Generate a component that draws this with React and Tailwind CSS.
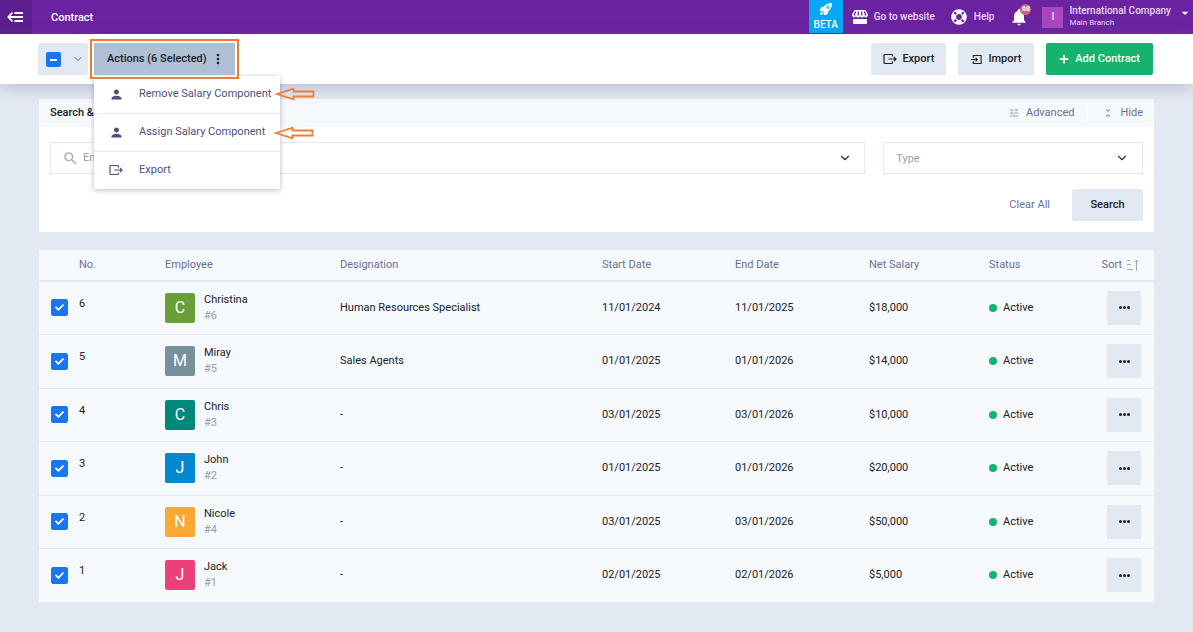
import React, { useState } from 'react';
import { FaCheck, FaPlus, FaLifeRing } from 'react-icons/fa';
import { IoRocket } from 'react-icons/io5';
import { MdNotifications, MdPerson, MdTune, MdUnfoldLess, MdSearch, MdMoreVert, MdArrowDropDown } from 'react-icons/md';
import { ChevronDown } from 'lucide-react';

const CONTRACTS = [
  { no: 6, name: 'Christina', code: '#6', color: 'bg-[#689f38]', designation: 'Human Resources Specialist', start: '11/01/2024', end: '11/01/2025', salary: '$18,000' },
  { no: 5, name: 'Miray', code: '#5', color: 'bg-[#78909c]', designation: 'Sales Agents', start: '01/01/2025', end: '01/01/2026', salary: '$14,000' },
  { no: 4, name: 'Chris', code: '#3', color: 'bg-[#00897b]', designation: '-', start: '03/01/2025', end: '03/01/2026', salary: '$10,000' },
  { no: 3, name: 'John', code: '#2', color: 'bg-[#0288d1]', designation: '-', start: '01/01/2025', end: '01/01/2026', salary: '$20,000' },
  { no: 2, name: 'Nicole', code: '#4', color: 'bg-[#f9a833]', designation: '-', start: '03/01/2025', end: '03/01/2026', salary: '$50,000' },
  { no: 1, name: 'Jack', code: '#1', color: 'bg-[#ec407a]', designation: '-', start: '02/01/2025', end: '02/01/2026', salary: '$5,000' }
];

const MenuToggleIcon = () => (
  <svg width="16" height="12" viewBox="0 0 16 12" fill="none" stroke="currentColor" strokeWidth="1.800">
    <path d="M1 6h15M5.500 1.500 1.300 6l4.200 4.500M7.500 2H16M7.500 10H16"/>
  </svg>
);

const StoreIcon = () => (
  <svg width="16" height="14" viewBox="0 0 16 14" fill="none">
    <path d="M2.500 0h11L16 4.500C16 8 12.500 8 12 6.300 11.500 8 8.500 8 8 6.300 7.500 8 4.500 8 4 6.300 3.500 8 0 8 0 4.500z" fill="currentColor"/>
    <path d="M3.500 1.500 2.300 5.500M6.300 1.500v4M9.700 1.500v4M12.500 1.500l1.200 4" stroke="#6b23a1" strokeWidth="1.300"/>
    <path d="M1 9h14v4a1 1 0 0 1-1 1H2a1 1 0 0 1-1-1z" fill="currentColor"/>
  </svg>
);

const ExportIcon = ({ size = 14 }) => (
  <svg width={size} height={size} viewBox="0 0 14 14" fill="none" stroke="currentColor" strokeWidth="1.200">
    <path d="M9.500 4.500v-1a1 1 0 0 0-1-1H2a1 1 0 0 0-1 1v7a1 1 0 0 0 1 1h6.500a1 1 0 0 0 1-1v-1M5.500 7H13M11 5l2 2-2 2"/>
  </svg>
);

const ImportIcon = () => (
  <svg width="11" height="11" viewBox="0 0 12 12" fill="none" stroke="currentColor" strokeWidth="1.200">
    <path d="M2.500 4V1.600h8.500v8.800H2.500V8M0 6h7M5 4l2 2-2 2"/>
  </svg>
);

const SortIcon = () => (
  <svg width="13" height="12" viewBox="0 0 13 12" fill="none" stroke="currentColor" strokeWidth="1">
    <path d="M1 1.500h3M1 5.500h4M1 10.500h6M10.500 12V1.200M8.500 3.200l2-2 2 2"/>
  </svg>
);

// Hollow pointer next to a menu entry
const PointerArrow = ({ className }) => (
  <svg className={className} width="41" height="14" viewBox="0 0 41 14" fill="none" stroke="#ed7d31" strokeWidth="1.800">
    <path d="M3 7 19.500 1.700V4.500H39.500v5H19.500v2.800z"/>
  </svg>
);

const ACTIONS = [
  { label: 'Remove Salary Component', icon: <MdPerson size={15}/>, arrow: 'absolute left-[180px] top-[11px]' },
  { label: 'Assign Salary Component', icon: <MdPerson size={15}/>, arrow: 'absolute left-[179px] top-3' },
  { label: 'Export', icon: <ExportIcon/> }
];

export default function App() {
  const [selected, setSelected] = useState(CONTRACTS.map(c => c.no));
  const [menuOpen, setMenuOpen] = useState(true);
  const [query, setQuery] = useState('');

  const toggle = (no) =>
    setSelected(selected.includes(no) ? selected.filter(n => n !== no) : [...selected, no]);

  return (
    <div className="min-h-screen bg-[#e3e9f2] font-['Roboto',sans-serif] text-[11px] leading-4 text-[#1c2126]">
      {/* Top bar */}
      <header className="flex items-stretch h-[34px] bg-[#6b23a1] text-[#ead9f7]">
        <button aria-label="Collapse menu" className="w-8 flex items-center justify-center pr-[2px] bg-[#5c1e8c] text-white">
          <MenuToggleIcon/>
        </button>
        <h1 className="ml-[19px] pt-px self-center font-medium text-white">Contract</h1>
        <div className="ml-auto flex items-center">
          <a href="#beta" className="w-[34px] h-[33px] mb-px mr-[9px] flex flex-col items-center justify-between pt-[2px] pb-px bg-[#03a9f4] text-white">
            <IoRocket size={14}/>
            <span className="text-[10px] leading-[14px] font-medium">BETA</span>
          </a>
          <a href="#website" className="flex items-center gap-[6px] mr-4 text-[10px] font-medium">
            <span className="text-white"><StoreIcon/></span>Go to website
          </a>
          <a href="#help" className="flex items-center gap-[7px] mr-[15px] text-[10px] font-medium">
            <FaLifeRing size={16} className="text-white"/>Help
          </a>
          <button aria-label="Notifications" className="relative mr-[13px] text-white">
            <MdNotifications size={20}/>
            <span className="absolute -top-[3px] right-[-2px] w-[11px] h-[11px] rounded-full bg-[#cf6679] text-[7px] leading-[11px] font-bold text-center">68</span>
          </button>
          <button className="flex items-center gap-[6px] text-left">
            <span className="w-[21px] h-[21px] flex items-center justify-center bg-[#ab47bc] font-medium">I</span>
            <span>
              <span className="block text-[10px] leading-3 font-medium">International Company</span>
              <span className="block text-[8px] leading-3">Main Branch</span>
            </span>
            <MdArrowDropDown size={16} className="self-start text-white"/>
          </button>
        </div>
      </header>

      {/* Toolbar */}
      <div className="relative z-10 flex items-center h-[50px] pl-[38px] pr-10 bg-white shadow-[0_4px_16px_rgba(82,97,140,0.3)]">
        <div className="w-[50px] h-8 flex items-center justify-between pl-2 pr-1 bg-[#e3e9f2] rounded-xs">
          <label className="relative flex">
            <input type="checkbox" aria-label="Select all" className="appearance-none w-[15px] h-[15px] rounded-xs bg-[#1976f2]"/>
            <span className="absolute left-1 top-[7px] w-[7px] h-[2px] bg-white pointer-events-none"/>
          </label>
          <button aria-label="Selection options" className="text-[#545b7a]"><ChevronDown size={12}/></button>
        </div>
        <div className="relative ml-[6px]">
          <button onClick={() => setMenuOpen(!menuOpen)}
            className="relative z-20 h-8 flex items-center gap-[3px] pl-[13px] pr-[9px] bg-[#b0c0d4] font-medium outline-2 outline-offset-2 outline-[#ed7d31]">
            Actions ({selected.length} Selected)
            <MdMoreVert size={16}/>
          </button>
          {menuOpen && (
            <ul className="absolute left-0 top-[33px] w-[186px] bg-white text-[#4f4f80] shadow-[0_1px_5px_rgba(40,50,80,0.35)]">
              {ACTIONS.map(action => (
                <li key={action.label} className="relative border-b border-[#e6ebf2] last:border-b-0">
                  <button className="w-full h-[37px] flex items-center pl-[15px] pb-px text-left">
                    <span className="w-[30px]">{action.icon}</span>
                    {action.label}
                  </button>
                  {action.arrow && <PointerArrow className={action.arrow}/>}
                </li>
              ))}
            </ul>
          )}
        </div>
        <div className="ml-auto flex gap-3">
          <button className="h-8 flex items-center gap-[5px] px-3 bg-[#e3e9f2] rounded-xs font-medium"><ExportIcon/>Export</button>
          <button className="h-8 flex items-center gap-[6px] px-[13px] bg-[#e3e9f2] rounded-xs font-medium"><ImportIcon/>Import</button>
          <button className="h-8 flex items-center gap-[6px] px-[13px] bg-[#16b26e] rounded-xs font-medium text-white"><FaPlus size={10}/>Add Contract</button>
        </div>
      </div>

      <main className="px-[39px] pt-[15px] pb-7">
        {/* Search & filter */}
        <section className="bg-white">
          <div className="flex items-center h-7 px-[11px] bg-[#f5f9fc] text-[#6c6f95]">
            <h2 className="font-medium text-[#1c2126]">Search &amp; Filter</h2>
            <button className="ml-auto flex items-center gap-[6px] pr-3"><MdTune size={12} className="text-[#a3a6bd]"/>Advanced</button>
            <button className="flex items-center gap-[6px] pl-[14px] border-l-2 border-white"><MdUnfoldLess size={12} className="text-[#8f92ad]"/>Hide</button>
          </div>
          <form onSubmit={(e) => e.preventDefault()} className="px-[11px] pt-[15px] pb-[11px]">
            <div className="grid grid-cols-4 gap-[18px]">
              <label className="col-span-3 flex items-center gap-1 h-8 pl-[11px] pr-3 border border-[#e3e9f2]">
                <MdSearch size={17} className="text-[#a9a9b8]"/>
                <input type="text" aria-label="Employee" placeholder="Enter employee name" value={query} onChange={(e) => setQuery(e.target.value)}
                  className="flex-1 outline-none placeholder:text-[#9a9bb5]"/>
                <ChevronDown size={14} className="text-[#2b2f36]"/>
              </label>
              <label className="relative">
                <select aria-label="Type" className="appearance-none w-full h-8 px-3 pt-px border border-[#e3e9f2] text-[#9a9bb5]">
                  <option>Type</option>
                </select>
                <ChevronDown size={14} className="absolute right-[14px] top-[9px] text-[#2b2f36] pointer-events-none"/>
              </label>
            </div>
            <div className="flex justify-end items-center gap-[22px] mt-[15px]">
              <button type="reset" onClick={() => setQuery('')} className="text-[#6c6f95]">Clear All</button>
              <button type="submit" className="w-[71px] h-8 bg-[#e3e9f2] rounded-xs font-medium">Search</button>
            </div>
          </form>
        </section>

        {/* Contracts */}
        <table className="w-full table-fixed mt-[18px] bg-[#f5f9fc] text-left border-collapse">
          <colgroup>
            <col className="w-[40px]"/>
            <col className="w-[86px]"/>
            <col className="w-[175px]"/>
            <col className="w-[262px]"/>
            <col className="w-[133px]"/>
            <col className="w-[134px]"/>
            <col className="w-[120px]"/>
            <col className="w-[165px]"/>
          </colgroup>
          <thead>
            <tr className="h-[31px] border-b-2 border-[#e3e9f2] text-[#6c6f95] [&>th]:font-normal">
              <th aria-label="Selected"/>
              <th>No.</th>
              <th>Employee</th>
              <th>Designation</th>
              <th>Start Date</th>
              <th>End Date</th>
              <th>Net Salary</th>
              <th>
                <div className="flex justify-between pr-[15px]">
                  Status
                  <button className="flex items-center gap-1">Sort <span className="text-[#a3a6bd]"><SortIcon/></span></button>
                </div>
              </th>
            </tr>
          </thead>
          <tbody>
            {CONTRACTS.map(c => (
              <tr key={c.no} className="odd:h-[53px] even:h-[54px] border-b border-[#e3e9f2] last:border-b-0">
                <td className="pl-3">
                  <label className="relative flex w-[17px]">
                    <input type="checkbox" aria-label={`Select ${c.name}`} checked={selected.includes(c.no)} onChange={() => toggle(c.no)}
                      className="appearance-none w-[17px] h-[17px] rounded-xs border border-[#1976f2] checked:bg-[#1976f2]"/>
                    <FaCheck size={9} className="absolute left-1 top-1 text-white pointer-events-none"/>
                  </label>
                </td>
                <td className="pb-2">{c.no}</td>
                <td>
                  <div className="flex items-center gap-[9px]">
                    <span className={`w-[30px] h-[30px] flex items-center justify-center rounded-xs text-base text-white ${c.color}`}>{c.name[0]}</span>
                    <div>
                      <div>{c.name}</div>
                      <div className="text-[#9a9bb5]">{c.code}</div>
                    </div>
                  </div>
                </td>
                <td>{c.designation}</td>
                <td>{c.start}</td>
                <td>{c.end}</td>
                <td>{c.salary}</td>
                <td>
                  <div className="flex items-center pr-[13px]">
                    <span className="w-2 h-2 mr-[6px] rounded-full bg-[#16b26e]"/>
                    Active
                    <button aria-label={`Options for ${c.name}`} className="ml-auto w-[34px] h-[34px] flex items-center justify-center gap-px bg-[#e3e9f2]">
                      <span className="w-[3px] h-[3px] rounded-full bg-[#1c2126]"/>
                      <span className="w-[3px] h-[3px] rounded-full bg-[#1c2126]"/>
                      <span className="w-[3px] h-[3px] rounded-full bg-[#1c2126]"/>
                    </button>
                  </div>
                </td>
              </tr>
            ))}
          </tbody>
        </table>
      </main>
    </div>
  );
}
